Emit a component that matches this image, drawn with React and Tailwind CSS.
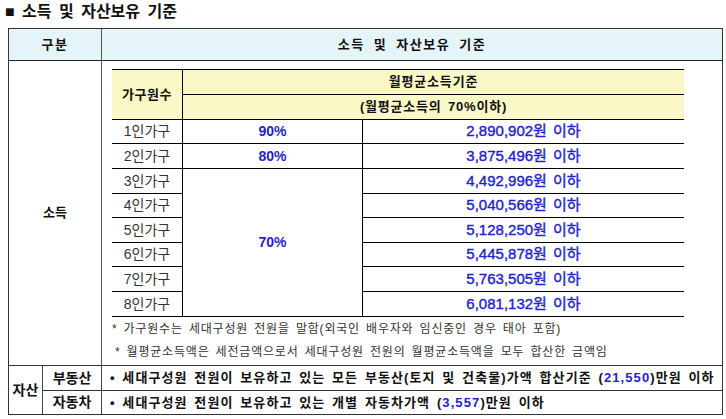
import React from "react";

const rows = [
    { label: "1인가구", amount: "2,890,902", h: "h-[24px]" },
    { label: "2인가구", amount: "3,875,496", h: "h-[25px]" },
    { label: "3인가구", amount: "4,492,996", h: "h-[25px]" },
    { label: "4인가구", amount: "5,040,566", h: "h-[24px]" },
    { label: "5인가구", amount: "5,128,250", h: "h-[25px]" },
    { label: "6인가구", amount: "5,445,878", h: "h-[24px]" },
    { label: "7인가구", amount: "5,763,505", h: "h-[25px]" },
    { label: "8인가구", amount: "6,081,132", h: "h-[25px]" },
];

const blue = "text-[#1f1fcc]";

function IncomeTable() {
    return (
        <div className="w-[572px] border-t border-black">
            {/* header */}
            <div className="flex h-[50px] border-b border-black bg-[#faf8c6]">
                <div className="flex w-[71px] items-center justify-center border-r border-black text-[13px] font-bold tracking-[0.5px] text-[#111]">
                    가구원수
                </div>
                <div className="flex flex-1 flex-col">
                    <div className="flex h-[25px] items-center justify-center border-b border-black text-[13px] font-bold tracking-[0.8px] text-[#111]">
                        월평균소득기준
                    </div>
                    <div className="flex h-[24px] items-center justify-center text-[13px] font-bold tracking-[0.8px] text-[#111] [word-spacing:2px]">
                        (월평균소득의 70%이하)
                    </div>
                </div>
            </div>
            {/* body */}
            <div className="flex">
                <div className="flex w-[71px] flex-col border-r border-black">
                    {rows.map(r => (
                        <div key={r.label} className={`flex ${r.h} items-center justify-center border-b border-black text-[14px] text-[#333]`}>
                            {r.label}
                        </div>
                    ))}
                </div>
                <div className={`flex w-[180px] flex-col border-r border-black text-[14px] font-bold ${blue}`}>
                    <div className="flex h-[24px] items-center justify-center border-b border-black">90%</div>
                    <div className="flex h-[25px] items-center justify-center border-b border-black">80%</div>
                    <div className="flex h-[148px] items-center justify-center border-b border-black">70%</div>
                </div>
                <div className="flex flex-1 flex-col">
                    {rows.map(r => (
                        <div key={r.amount} className={`flex ${r.h} items-center justify-center border-b border-black text-[15px] ${blue} [-webkit-text-stroke:0.4px_#1f1fcc] [word-spacing:2px]`}>
                            {r.amount}원 이하
                        </div>
                    ))}
                </div>
            </div>
        </div>
    );
}

function AssetRow({ label, children, last }) {
    return (
        <div className={`flex ${last ? "h-[23px]" : "h-[25px] border-b border-[#333]"}`}>
            <div className="flex w-[59px] items-center justify-center border-r border-[#444] text-[14px] font-bold text-[#111]">
                {label}
            </div>
            <div className="flex flex-1 items-center pl-[8px] text-[13px] font-bold tracking-[1.1px] text-[#111] [word-spacing:2px]">
                {children}
            </div>
        </div>
    );
}

export default function App() {
    return (
        <div className="h-[419px] w-[726px] overflow-hidden bg-white font-['Liberation_Sans','Noto_Sans_CJK_KR',sans-serif]">
            <div className="flex h-[28px] items-center pb-[4px] pl-[5px] text-[16px] font-bold text-[#111] [word-spacing:3px]">
                ■ 소득 및 자산보유 기준
            </div>
            <div className="ml-[8px] w-[715px] border border-[#333]">
                {/* table header */}
                <div className="flex h-[32px] border-b border-[#222] bg-[#e4f4f8] text-[13px] font-bold text-[#111]">
                    <div className="flex w-[93px] items-center justify-center border-r border-[#555] tracking-[1.5px]">
                        구분
                    </div>
                    <div className="flex flex-1 items-center justify-center tracking-[1.5px] [word-spacing:4px]">
                        소득 및 자산보유 기준
                    </div>
                </div>
                {/* income */}
                <div className="flex h-[305px] border-b border-[#333]">
                    <div className="flex w-[93px] items-center justify-center border-r border-[#555] text-[13px] font-bold text-[#111]">
                        소득
                    </div>
                    <div className="flex flex-1 flex-col pl-[10px] pt-[8px]">
                        <IncomeTable />
                        <div className="flex h-[23px] items-center text-[12px] tracking-[0.8px] text-[#333] [word-spacing:2px]">
                            * 가구원수는 세대구성원 전원을 말함(외국인 배우자와 임신중인 경우 태아 포함)
                        </div>
                        <div className="flex h-[23px] items-center pl-[3px] text-[12px] tracking-[0.8px] text-[#333] [word-spacing:2px]">
                            * 월평균소득액은 세전금액으로서 세대구성원 전원의 월평균소득액을 모두 합산한 금액임
                        </div>
                    </div>
                </div>
                {/* assets */}
                <div className="flex">
                    <div className="flex w-[34px] items-center justify-center border-r border-[#444] text-[14px] font-bold text-[#111]">
                        자산
                    </div>
                    <div className="flex flex-1 flex-col">
                        <AssetRow label="부동산">
                            • 세대구성원 전원이 보유하고 있는 모든 부동산(토지 및 건축물)가액 합산기준 (<span className={blue}>21,550</span>)만원 이하
                        </AssetRow>
                        <AssetRow label="자동차" last>
                            • 세대구성원 전원이 보유하고 있는 개별 자동차가액 (<span className={blue}>3,557</span>)만원 이하
                        </AssetRow>
                    </div>
                </div>
            </div>
        </div>
    );
}
